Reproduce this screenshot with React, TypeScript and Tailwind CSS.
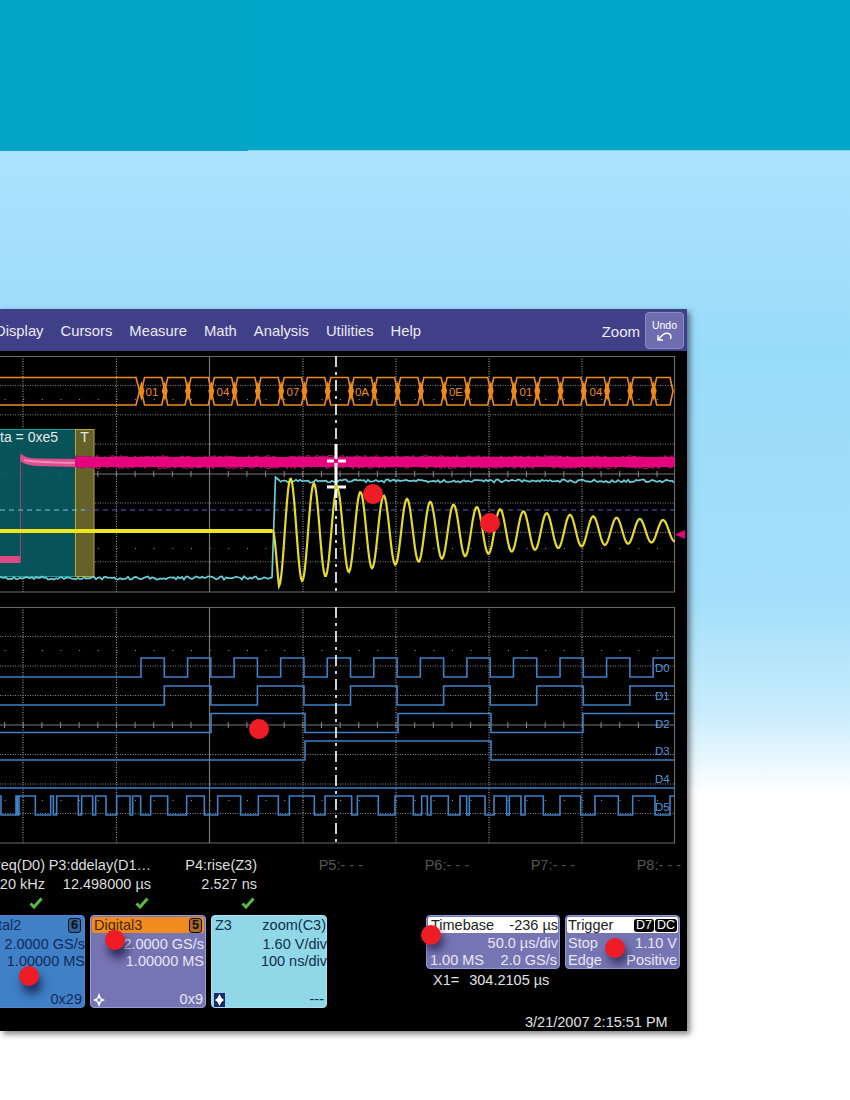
const VERTS = [23, 116.5, 303, 396, 489, 582]
const ORANGE = "#ee8a1c"
const BLUE = "#3f80c6"

function noise(i: number, amp: number) {
  const v = Math.sin(i * 12.9898) * 43758.5453
  return (v - Math.floor(v) - 0.5) * 2 * amp
}

function noisy(x0: number, x1: number, y: number, amp: number, step = 2) {
  const pts: string[] = []
  for (let x = x0; x <= x1; x += step) pts.push(`${x},${(y + noise(x + y, amp)).toFixed(1)}`)
  return pts.join(" ")
}

function steps(hi: number, lo: number, startHigh: boolean, xs: number[], end = 674) {
  let high = startHigh
  let d = `M0 ${high ? hi : lo}`
  for (const x of xs) {
    d += ` L${x} ${high ? hi : lo}`
    high = !high
    d += ` L${x} ${high ? hi : lo}`
  }
  return d + ` L${end} ${high ? hi : lo}`
}

function Grid({ top, rows, dotRows }: { top: number; rows: number[]; dotRows: number[] }) {
  const bottom = top + 236
  const mid = top + 118
  const ticks: number[] = []
  for (let x = 4.6; x < 674; x += 18.64) ticks.push(x)
  return (
    <g>
      {rows.map((y) => (
        <line key={y} x1="0" x2="674" y1={y} y2={y} stroke="#8a8a8a" strokeDasharray="1 1.5" />
      ))}
      {dotRows.map((y) =>
        ticks.map((x) => <rect key={`${y}-${x}`} x={x} y={y} width="1" height="1" fill="#999" />),
      )}
      {VERTS.map((x) => (
        <line key={x} x1={x} x2={x} y1={top} y2={bottom} stroke="#9a9a9a" strokeWidth="1.2" strokeDasharray="1 1.5" />
      ))}
      <line x1="0" x2="674" y1={mid} y2={mid} stroke="#777" strokeWidth="1.2" />
      {ticks.map((x) => (
        <line key={x} x1={x} x2={x} y1={mid - 3} y2={mid + 3} stroke="#888" />
      ))}
      <line x1="209.5" x2="209.5" y1={top} y2={bottom} stroke="#777" strokeWidth="1.2" />
      <path d={`M0 ${top + 0.5} H674.5 V${bottom} H0`} fill="none" stroke="#6a6a6a" strokeWidth="1.2" />
    </g>
  )
}

function Cursor({ top, bottom }: { top: number; bottom: number }) {
  return (
    <line x1="336" x2="336" y1={top} y2={bottom} stroke="#f6f6f6" strokeWidth="1.7" strokeDasharray="11 5 3 5" />
  )
}

function Bus() {
  const hexes: number[][] = []
  for (let a = 141.5; a < 670; a += 23.28) hexes.push([a, Math.min(a + 23.28, 673)])
  const top = 377.5
  const bot = 405
  const mid = 391
  return (
    <g fill="none" stroke={ORANGE} strokeWidth="1.6">
      <path d={`M0 ${top} H136 L139.5 ${mid} L136 ${bot} H0`} />
      {hexes.map(([a, b]) => (
        <g key={a}>
          <path d={`M${a} ${mid} L${a + 3} ${top} H${b - 3} L${b} ${mid} L${b - 3} ${bot} H${a + 3} Z`} />
          <path d={`M${a - 3} ${mid} L${a} ${mid - 10} L${a + 3} ${mid} L${a} ${mid + 10} Z`} fill={ORANGE} stroke="none" />
        </g>
      ))}
      {[
        [152, "01"],
        [223, "04"],
        [293, "07"],
        [362, "0A"],
        [456, "0E"],
        [526, "01"],
        [596, "04"],
      ].map(([x, t]) => (
        <text key={x as number} x={x as number} y="396" textAnchor="middle" fontSize="11.5" fill={ORANGE} stroke="none">
          {t}
        </text>
      ))}
    </g>
  )
}

function AnalogScreen() {
  const sine: string[] = []
  for (let x = 272; x <= 675; x += 1) {
    const amp = 55 * Math.exp(-(x - 279) * 0.0042)
    const ramp = Math.min(1, (x - 272) / 7)
    sine.push(`${x},${(531 + ramp * amp * Math.cos(((x - 279) * 2 * Math.PI) / 23.28)).toFixed(1)}`)
  }
  return (
    <svg className="block" width="687" height="238" viewBox="0 355 687 238">
      <Grid
        top={356}
        rows={[385.4, 414.8, 444.2, 503, 532.4, 561.8]}
        dotRows={[399, 548]}
      />
      <Bus />
      <rect x="-2" y="429.5" width="77.5" height="147" fill="#07575e" fillOpacity="0.95" stroke="#179a9a" />
      <rect x="75.5" y="429.5" width="18.5" height="147" fill="#66602a" stroke="#b3ac2c" />
      <text x="0" y="442" fontSize="14" fill="#e8e8e8">ta = 0xe5</text>
      <text x="84.5" y="442" fontSize="14" textAnchor="middle" fill="#e8e8e8">T</text>
      <line x1="0" x2="85" y1="510" y2="510" stroke="#7fc4d8" strokeWidth="1.2" strokeDasharray="5 4" />
      <line x1="85" x2="674" y1="510" y2="510" stroke="#5a5fc4" strokeWidth="1.2" strokeDasharray="5 4" />
      <path d="M0 556 H20.5 V563 H0 Z" fill="#dc4a86" />
      <line x1="20.5" x2="20.5" y1="456" y2="558" stroke="#d84068" strokeWidth="0.8" />
      <path d="M20.5 453 Q24 458 36 458.5 L75 459 V467 L36 466 Q24 465 20.5 461 Z" fill="#df4d8f" />
      <path d="M24 460 Q30 462 75 463" fill="none" stroke="#ee8ab4" strokeWidth="2" />
      <polyline points={noisy(75, 674, 457, 1.4)} fill="none" stroke="#a01a63" strokeWidth="1.2" />
      <polyline points={noisy(75, 674, 467, 1.6)} fill="none" stroke="#a01a63" strokeWidth="1.2" />
      <rect x="75" y="457" width="599.5" height="10" fill="#e6007e" />
      <polyline points={noisy(0, 272, 578, 1.6)} fill="none" stroke="#68cfd9" strokeWidth="1.7" />
      <path d="M272 578 L275.5 477 L280 481" fill="none" stroke="#68cfd9" strokeWidth="1.7" />
      <polyline points={noisy(280, 674, 481, 1.5)} fill="none" stroke="#68cfd9" strokeWidth="1.7" />
      <line x1="0" x2="272" y1="531" y2="531" stroke="#efe71c" strokeWidth="3.8" />
      <polyline points={sine.join(" ")} fill="none" stroke="#e3da2c" strokeWidth="2.2" />
      <Cursor top={356} bottom={592} />
      <path d="M336 444 V498 M327 461 H346 M327 487 H346" fill="none" stroke="#fff" strokeWidth="3" />
      <rect x="334" y="459" width="4" height="4" fill="#e6007e" />
      <rect x="334" y="485" width="4" height="4" fill="#d8cf20" />
      <path d="M675 534.5 L685 530 V539 Z" fill="#e6007e" />
    </svg>
  )
}

const D5 = [
  3, 48, 52, 57, 106, 152, 160, 170, 235, 245, 278, 287, 318, 350, 390, 398, 422, 452, 503, 560, 613, 653, 722, 775,
  835, 868, 943, 975, 1055, 1072, 1135, 1185, 1240, 1265, 1282, 1293, 1345, 1380, 1400, 1408, 1455, 1482, 1520, 1528,
  1563, 1575, 1630, 1680, 1742, 1785, 1855, 1898, 1965, 2010,
].map((x) => x / 3)

function DigitalScreen() {
  const d0 = Array.from({ length: 23 }, (_, k) => 141 + 23.28 * k)
  const d1 = d0.filter((_, k) => k % 2 === 1)
  const labels: [string, number][] = [
    ["D0", 672],
    ["D1", 700],
    ["D2", 728],
    ["D3", 755],
    ["D4", 783],
    ["D5", 811],
  ]
  return (
    <svg className="block" width="687" height="238" viewBox="0 606 687 238">
      <Grid top={607} rows={[636.5, 666, 695.5, 754.5, 784, 813.5]} dotRows={[650, 800]} />
      <g fill="none" stroke={BLUE} strokeWidth="1.6">
        <path d={steps(658, 677, false, d0)} />
        <path d={steps(686, 705, false, d1)} />
        <path d={steps(713.5, 732.5, false, [211, 305, 398, 491, 583])} />
        <path d={steps(741, 760, false, [305, 491])} />
        <path d="M0 788 H674" />
        <path d={steps(796, 815, true, D5)} />
      </g>
      {labels.map(([t, y]) => (
        <text key={t} x="655" y={y} fontSize="11.5" fill="#4f97dc">{t}</text>
      ))}
      <Cursor top={607} bottom={843} />
    </svg>
  )
}

function Readout({ name, value, ok, dim }: { name: string; value?: string; ok?: boolean; dim?: boolean }) {
  return (
    <div className="w-[106px] shrink-0 flex flex-col items-end">
      <div className={`h-[20px] leading-[20px] whitespace-nowrap text-[14.5px] ${dim ? "text-[#555]" : "text-[#dedede]"}`}>{name}</div>
      <div className="h-[19px] leading-[19px] whitespace-nowrap text-[14.5px] text-[#dedede]">{value}</div>
      {ok && (
        <svg className="mr-[2px] mt-[3px]" width="14" height="12" viewBox="0 0 14 12">
          <path d="M1.5 6.5 L5 10 L12.5 1.5" fill="none" stroke="#58b947" strokeWidth="3" />
        </svg>
      )}
    </div>
  )
}

function Badge({ children, dark }: { children: string; dark?: boolean }) {
  return (
    <span className={`rounded-[3px] px-[2px] leading-[13px] text-[12.5px] ${dark ? "bg-black text-white" : "border-[1.5px] border-[#101010] bg-[#0a1a3a]/30 font-bold text-[#101010]"}`}>
      {children}
    </span>
  )
}

function TraceCard({
  className,
  titleClass,
  title,
  titleRight,
  badge,
  lines,
  lineClass,
  foot,
  icon,
}: {
  className: string
  titleClass: string
  title: string
  titleRight?: string
  badge?: string
  lines: string[]
  lineClass?: string
  foot: string
  icon?: React.ReactNode
}) {
  return (
    <div className={`flex h-[93px] w-[116px] shrink-0 flex-col rounded-[4px] border p-px text-[14.5px] leading-[17px] ${className}`}>
      <div className={`flex h-[16px] items-center justify-between rounded-[2px] px-[2px] ${titleClass}`}>
        <span className="whitespace-nowrap">{title}</span>
        {titleRight && <span className="-mr-[3px] whitespace-nowrap">{titleRight}</span>}
        {badge && <Badge>{badge}</Badge>}
      </div>
      <div className={`mt-[2px] flex flex-col items-end pt-[1px] ${lineClass ?? ""}`}>
        {lines.map((l) => (
          <span key={l} className="whitespace-nowrap">{l}</span>
        ))}
      </div>
      <div className="-mb-[2px] mt-auto flex items-center justify-between pl-[1px] pr-[1px]">
        <span className="h-[14px] w-[14px]">{icon}</span>
        <span>{foot}</span>
      </div>
    </div>
  )
}

function Dot({ className }: { className: string }) {
  return <div className={`absolute h-[20px] w-[20px] rounded-full bg-[#ee1c25] ${className}`} />
}

export default function App() {
  return (
    <div className="h-[1100px] w-[850px] overflow-hidden bg-white font-['Liberation_Sans',sans-serif]">
      <div className="flex h-[151px]">
        <div className="w-[248px] bg-[#03a5c6]" />
        <div className="flex-1 border-b border-[#8fcde3] bg-[#00a6c7]" />
      </div>
      <div className="h-[949px] bg-[linear-gradient(180deg,#ace2fd_0px,#99dcfa_200px,#a3dffa_450px,#c8ecfc_560px,#ffffff_645px)] pt-[158px]">
        <div className="relative h-[722px] w-[687px] overflow-hidden bg-black shadow-[3px_3px_6px_rgba(0,0,0,0.5)]">
          <div className="flex h-[42px] items-center gap-[17px] bg-[#3f4087] pr-[3px] pl-0 text-[14.8px] text-[#eceaf4]">
            <span className="-ml-[5px] pt-[3px]">Display</span>
            <span className="pt-[3px]">Cursors</span>
            <span className="pt-[3px]">Measure</span>
            <span className="pt-[3px]">Math</span>
            <span className="pt-[3px]">Analysis</span>
            <span className="pt-[3px]">Utilities</span>
            <span className="pt-[3px]">Help</span>
            <span className="ml-auto -mr-[12px] pt-[4px] text-[15px]">Zoom</span>
            <div className="flex h-[37px] w-[39px] flex-col items-center justify-center rounded-[4px] border border-[#8b8bc8] bg-[#6d6db0] text-[10.5px] leading-[12px] text-white">
              <span>Undo</span>
              <svg width="18" height="10" viewBox="0 0 18 10">
                <path d="M2 4 L2 9 L7 9 M2 9 L6 4.5 Q9 1.5 12.5 2.5 Q16 4 14.5 8" fill="none" stroke="#fff" strokeWidth="1.4" />
              </svg>
            </div>
          </div>
          <div className="mt-[4px]">
            <AnalogScreen />
          </div>
          <div className="mt-[13px]">
            <DigitalScreen />
          </div>
          <div className="-ml-[61px] mt-[11px] flex h-[60px] items-start">
            <Readout name="P2:freq(D0)" value="2.5820 kHz" ok />
            <Readout name="P3:ddelay(D1…" value="12.498000 µs" ok />
            <Readout name="P4:rise(Z3)" value="2.527 ns" ok />
            <Readout name="P5:- - -" dim />
            <Readout name="P6:- - -" dim />
            <Readout name="P7:- - -" dim />
            <Readout name="P8:- - -" dim />
          </div>
          <div className="-ml-[31px] flex items-start gap-[5px]">
            <TraceCard
              className="border-[#5f7fc8] bg-[#3f80c6] text-[#13295c]"
              titleClass="bg-[#3f80c6]"
              title="Digital2"
              badge="6"
              lines={["2.0000 GS/s", "1.00000 MS"]}
              lineClass="-mr-[2px]"
              foot="0x29"
            />
            <TraceCard
              className="border-[#9a9ad4] bg-[#7675b3] text-[#e6e6f4]"
              titleClass="bg-[#f08c1e] !text-[#4a2600]"
              title="Digital3"
              badge="5"
              lines={["2.0000 GS/s", "1.00000 MS"]}
              foot="0x9"
              icon={
                <svg width="12" height="14" viewBox="0 0 12 14">
                  <path d="M6 0 L8 5 L12 7 L8 9 L6 14 L4 9 L0 7 L4 5 Z" fill="#fff" />
                  <rect x="4.5" y="5.5" width="3" height="3" fill="#7675b3" />
                </svg>
              }
            />
            <TraceCard
              className="border-[#a8e0ec] bg-[#90d7e8] text-[#12304a]"
              titleClass="bg-[#90d7e8]"
              title="Z3"
              titleRight="zoom(C3)"
              lines={["1.60 V/div", "100 ns/div"]}
              lineClass="-mr-[2px]"
              foot="---"
              icon={
                <svg width="12" height="14" viewBox="0 0 12 14">
                  <rect width="11" height="14" fill="#1b2a70" />
                  <path d="M5.5 1 L7.5 5 L10 7 L7.5 9 L5.5 13 L3.5 9 L1 7 L3.5 5 Z" fill="#fff" />
                </svg>
              }
            />
            <div className="ml-[94px] w-[134px] shrink-0">
              <div className="flex h-[54px] flex-col rounded-[4px] border border-[#9298d2] bg-[#7675b3] p-px text-[14.5px] leading-[17px] text-[#e6e6f4]">
                <div className="flex h-[16px] items-center justify-between rounded-[2px] bg-white pl-[3px] pr-0 text-[#222]">
                  <span>Timebase</span>
                  <span>-236 µs</span>
                </div>
                <div className="mt-[2px] text-right">50.0 µs/div</div>
                <div className="flex justify-between pl-[2px] pr-[1px]">
                  <span>1.00 MS</span>
                  <span>2.0 GS/s</span>
                </div>
              </div>
              <div className="mt-[3px] flex gap-[10px] pl-[7px] text-[14.5px] leading-[17px] text-[#e2e2e2]">
                <span>X1=</span>
                <span>304.2105 µs</span>
              </div>
            </div>
            <div className="flex h-[54px] w-[115px] shrink-0 flex-col rounded-[4px] border border-[#9298d2] bg-[#7675b3] p-px text-[14.5px] leading-[17px] text-[#e6e6f4]">
              <div className="flex h-[16px] items-center justify-between rounded-[2px] bg-white px-px text-[#222]">
                <span>Trigger</span>
                <span className="flex gap-px">
                  <Badge dark>D7</Badge>
                  <Badge dark>DC</Badge>
                </span>
              </div>
              <div className="mt-[2px] flex justify-between px-px">
                <span>Stop</span>
                <span>1.10 V</span>
              </div>
              <div className="flex justify-between px-px">
                <span>Edge</span>
                <span>Positive</span>
              </div>
            </div>
          </div>
          <div className="absolute top-[703px] left-[525px] text-[14.5px] leading-[20px] whitespace-nowrap text-[#e2e2e2]">3/21/2007 2:15:51 PM</div>
          <Dot className="left-[363px] top-[175px]" />
          <Dot className="left-[480px] top-[204px]" />
          <Dot className="left-[249px] top-[410px]" />
          <Dot className="left-[105px] top-[621px] shadow-[3px_8px_10px_rgba(10,10,50,0.7)]" />
          <Dot className="left-[19px] top-[657px] shadow-[3px_8px_10px_rgba(10,10,50,0.7)]" />
          <Dot className="left-[421px] top-[616px] shadow-[3px_6px_8px_rgba(10,10,50,0.6)]" />
          <Dot className="left-[605px] top-[629px] shadow-[3px_6px_8px_rgba(10,10,50,0.6)]" />
        </div>
      </div>
    </div>
  )
}
